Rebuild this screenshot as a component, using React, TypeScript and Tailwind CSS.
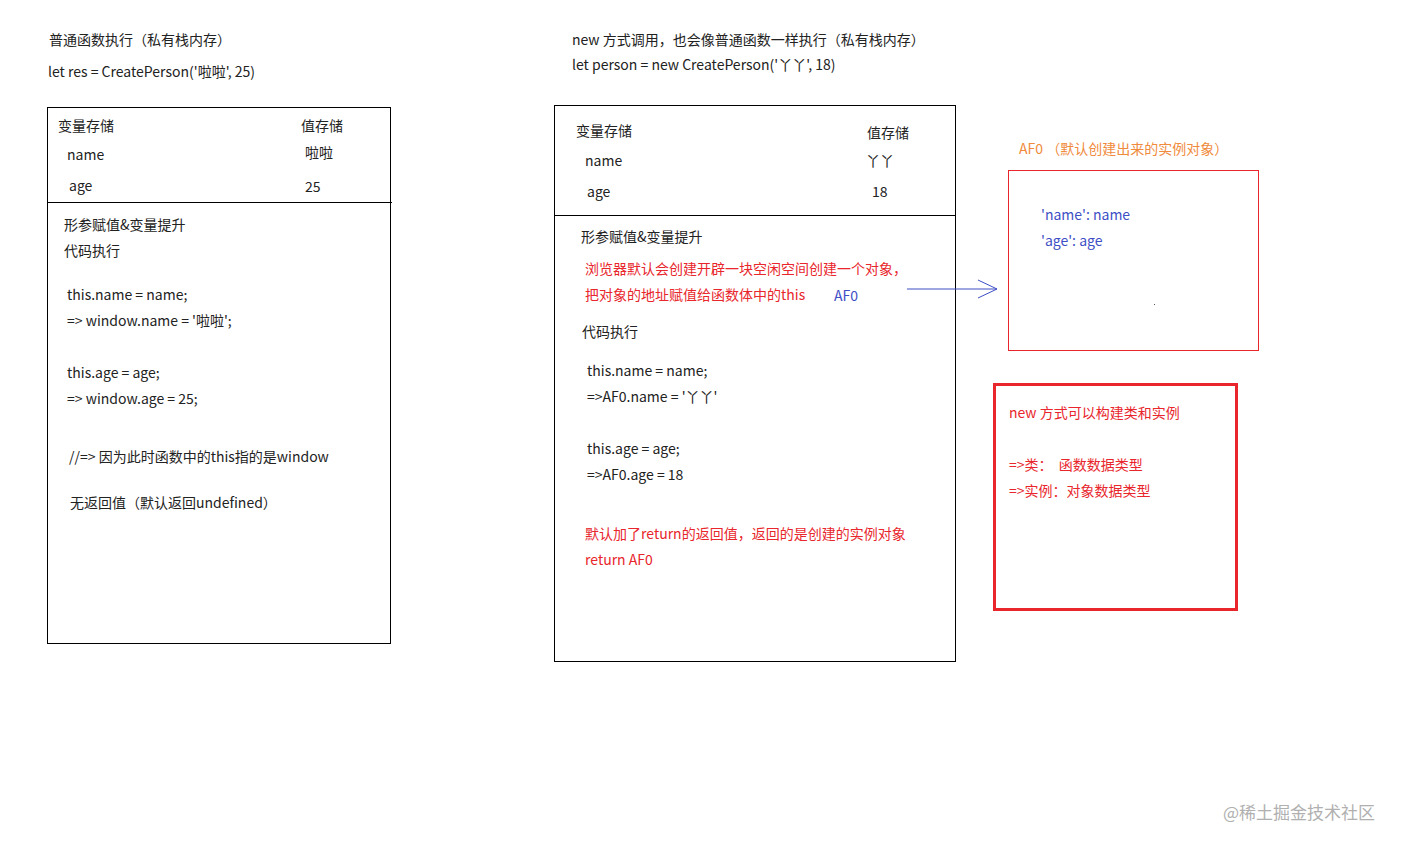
const F = { fontFamily: '"Noto Sans CJK SC", "Noto Sans", sans-serif' };

function T({ x, y, c = "text-[#222]", children }: { x: number; y: number; c?: string; children: React.ReactNode }) {
  return (
    <div className={`absolute text-[14px] leading-none whitespace-nowrap ${c}`} style={{ left: x, top: y }}>
      {children}
    </div>
  );
}

const R = "text-[#e8262c]";
const B = "text-[#3e4fc6]";

export default function App() {
  return (
    <div className="relative w-[1407px] h-[847px] bg-white overflow-hidden" style={F}>
      <T x={49} y={32}>普通函数执行（私有栈内存）</T>
      <T x={48} y={64}>let res = CreatePerson('啦啦', 25)</T>

      <div className="absolute left-[47px] top-[107px] w-[344px] h-[537px] border border-black" />
      <div className="absolute left-[47px] top-[202px] w-[345px] h-px bg-black" />
      <T x={58} y={118}>变量存储</T>
      <T x={301} y={118}>值存储</T>
      <T x={67} y={147}>name</T>
      <T x={305} y={145}>啦啦</T>
      <T x={69} y={178}>age</T>
      <T x={305} y={179}>25</T>
      <T x={64} y={217}>形参赋值&amp;变量提升</T>
      <T x={64} y={243}>代码执行</T>
      <T x={67} y={287}>this.name = name;</T>
      <T x={67} y={313}>=&gt; window.name = '啦啦';</T>
      <T x={67} y={365}>this.age = age;</T>
      <T x={67} y={391}>=&gt; window.age = 25;</T>
      <T x={69} y={449}>//=&gt; 因为此时函数中的this指的是window</T>
      <T x={70} y={495}>无返回值（默认返回undefined）</T>

      <T x={572} y={32}>new 方式调用，也会像普通函数一样执行（私有栈内存）</T>
      <T x={572} y={57}>let person = new CreatePerson('丫丫', 18)</T>

      <div className="absolute left-[554px] top-[105px] w-[402px] h-[557px] border border-black" />
      <div className="absolute left-[554px] top-[215px] w-[402px] h-px bg-black" />
      <T x={576} y={123}>变量存储</T>
      <T x={867} y={125}>值存储</T>
      <T x={585} y={153}>name</T>
      <T x={866} y={153}>丫丫</T>
      <T x={587} y={184}>age</T>
      <T x={872} y={184}>18</T>
      <T x={581} y={229}>形参赋值&amp;变量提升</T>
      <T x={585} y={261} c={R}>浏览器默认会创建开辟一块空闲空间创建一个对象，</T>
      <T x={585} y={287} c={R}>把对象的地址赋值给函数体中的this</T>
      <T x={834} y={288} c={B}>AF0</T>
      <T x={582} y={324}>代码执行</T>
      <T x={587} y={363}>this.name = name;</T>
      <T x={587} y={389}>=&gt;AF0.name = '丫丫'</T>
      <T x={587} y={441}>this.age = age;</T>
      <T x={587} y={467}>=&gt;AF0.age = 18</T>
      <T x={585} y={526} c={R}>默认加了return的返回值，返回的是创建的实例对象</T>
      <T x={585} y={552} c={R}>return AF0</T>

      <svg className="absolute left-[905px] top-[278px]" width="95" height="24">
        <line x1="2" y1="11" x2="92" y2="11" stroke="#3e4fc6" strokeWidth="1" />
        <polyline points="73,2 92,11 73,20" fill="none" stroke="#3e4fc6" strokeWidth="1" />
      </svg>

      <T x={1019} y={141} c="text-[#f08a3c]">AF0 （默认创建出来的实例对象）</T>
      <div className="absolute left-[1008px] top-[170px] w-[251px] h-[181px] border border-[#e8262c]" />
      <T x={1041} y={207} c={B}>'name': name</T>
      <T x={1041} y={233} c={B}>'age': age</T>
      <div className="absolute left-[1154px] top-[304px] w-px h-px bg-[#555]" />

      <div className="absolute left-[993px] top-[383px] w-[245px] h-[228px] border-[3px] border-[#e8262c]" />
      <T x={1009} y={405} c={R}>new 方式可以构建类和实例</T>
      <T x={1009} y={457} c={R}>=&gt;类：&nbsp;&nbsp;函数数据类型</T>
      <T x={1009} y={483} c={R}>=&gt;实例：对象数据类型</T>

      <div className="absolute left-[1223px] top-[803px] text-[17px] leading-none text-[#b0b0b0]">@稀土掘金技术社区</div>
    </div>
  );
}
